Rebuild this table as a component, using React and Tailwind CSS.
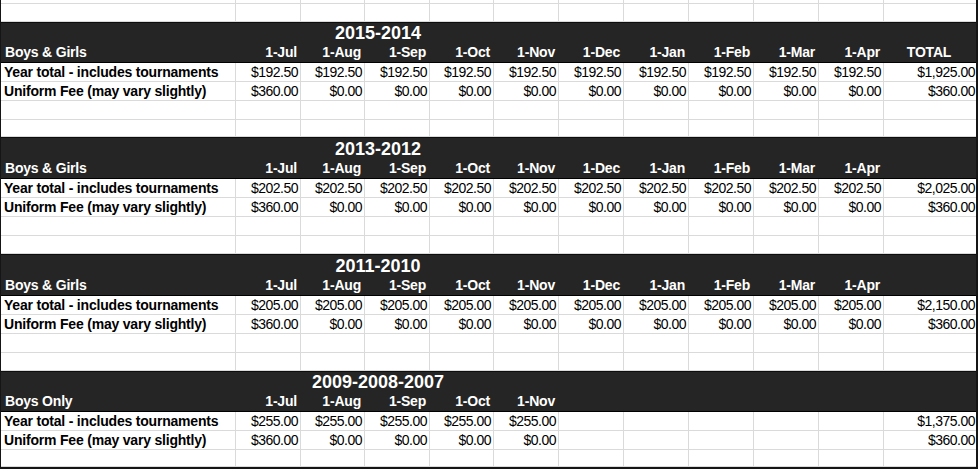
import React from "react";

const COLS =
  "grid grid-cols-[235px_65px_64px_65px_64px_65px_65px_65px_65px_65px_65px_1fr]";
const MONTHS = ["1-Jul", "1-Aug", "1-Sep", "1-Oct", "1-Nov", "1-Dec", "1-Jan", "1-Feb", "1-Mar", "1-Apr"];

const sections = [
  {
    title: "2015-2014",
    group: "Boys & Girls",
    months: 10,
    totalHead: true,
    fee: "$192.50",
    total: "$1,925.00",
    band: ["h-[20px]", "h-[21px]"],
    rows: ["h-[19px]", "h-[19px]", "h-[19px]", "h-[17px]"],
  },
  {
    title: "2013-2012",
    group: "Boys & Girls",
    months: 10,
    fee: "$202.50",
    total: "$2,025.00",
    band: ["h-[21px]", "h-[21px]"],
    rows: ["h-[19px]", "h-[19px]", "h-[19px]", "h-[18px]"],
  },
  {
    title: "2011-2010",
    group: "Boys & Girls",
    months: 10,
    fee: "$205.00",
    total: "$2,150.00",
    band: ["h-[21px]", "h-[21px]"],
    rows: ["h-[19px]", "h-[19px]", "h-[19px]", "h-[18px]"],
  },
  {
    title: "2009-2008-2007",
    group: "Boys Only",
    months: 5,
    fee: "$255.00",
    total: "$1,375.00",
    band: ["h-[20px]", "h-[21px]"],
    rows: ["h-[19px]", "h-[19px]", "h-[17px]"],
  },
];

function BlankRow({ h }) {
  return (
    <div className={`${COLS} ${h}`}>
      {Array.from({ length: 12 }).map((_, i) => (
        <div key={i} className={`border-b border-[#dadada] ${i < 11 ? "border-r" : ""}`} />
      ))}
    </div>
  );
}

function DataRow({ h, label, values, total }) {
  return (
    <div className={`${COLS} ${h}`}>
      <div className="flex items-center border-b border-r border-[#dadada] pl-[3px] font-bold tracking-[-0.2px] whitespace-nowrap">
        {label}
      </div>
      {Array.from({ length: 10 }).map((_, i) => (
        <div
          key={i}
          className="flex items-center justify-end border-b border-r border-[#dadada] pr-[2px] tracking-[-0.5px]"
        >
          {values[i] || ""}
        </div>
      ))}
      <div className="flex items-center justify-end border-b border-[#dadada] pr-[1px] tracking-[-0.5px]">
        {total}
      </div>
    </div>
  );
}

function Section({ s }) {
  const fees = Array.from({ length: s.months }).map(() => s.fee);
  const uniform = Array.from({ length: s.months }).map((_, i) => (i === 0 ? "$360.00" : "$0.00"));
  return (
    <div>
      <div className="bg-[#252525] text-white font-bold">
        <div className={`${COLS} ${s.band[0]} border-t border-[#0d0d0d]`}>
          <div className="col-start-3 col-span-2 flex items-end justify-center pl-[25px] text-[18px] leading-none whitespace-nowrap">
            {s.title}
          </div>
        </div>
        <div className={`${COLS} ${s.band[1]} border-b border-black`}>
          <div className="flex items-center pl-[4px] tracking-[-0.2px]">{s.group}</div>
          {MONTHS.map((m, i) => (
            <div key={m} className="flex items-center justify-end pr-[4px] tracking-[-0.2px]">
              {i < s.months ? m : ""}
            </div>
          ))}
          <div className="flex items-center justify-center pr-[2px] tracking-[-0.2px]">
            {s.totalHead ? "TOTAL" : ""}
          </div>
        </div>
      </div>
      <DataRow h={s.rows[0]} label="Year total - includes tournaments" values={fees} total={s.total} />
      <DataRow h={s.rows[1]} label="Uniform Fee (may vary slightly)" values={uniform} total="$360.00" />
      {s.rows.slice(2).map((h, i) => (
        <BlankRow key={i} h={h} />
      ))}
    </div>
  );
}

export default function App() {
  return (
    <div className="w-[978px] h-[469px] overflow-hidden bg-white">
      <div className="h-[469px] border-l border-r-2 border-b-2 border-[#151515] font-['Liberation_Sans',Arial,sans-serif] text-[14px] leading-none text-black">
        <BlankRow h="h-[4px]" />
        <BlankRow h="h-[18px]" />
        {sections.map((s) => (
          <Section key={s.title} s={s} />
        ))}
      </div>
    </div>
  );
}
